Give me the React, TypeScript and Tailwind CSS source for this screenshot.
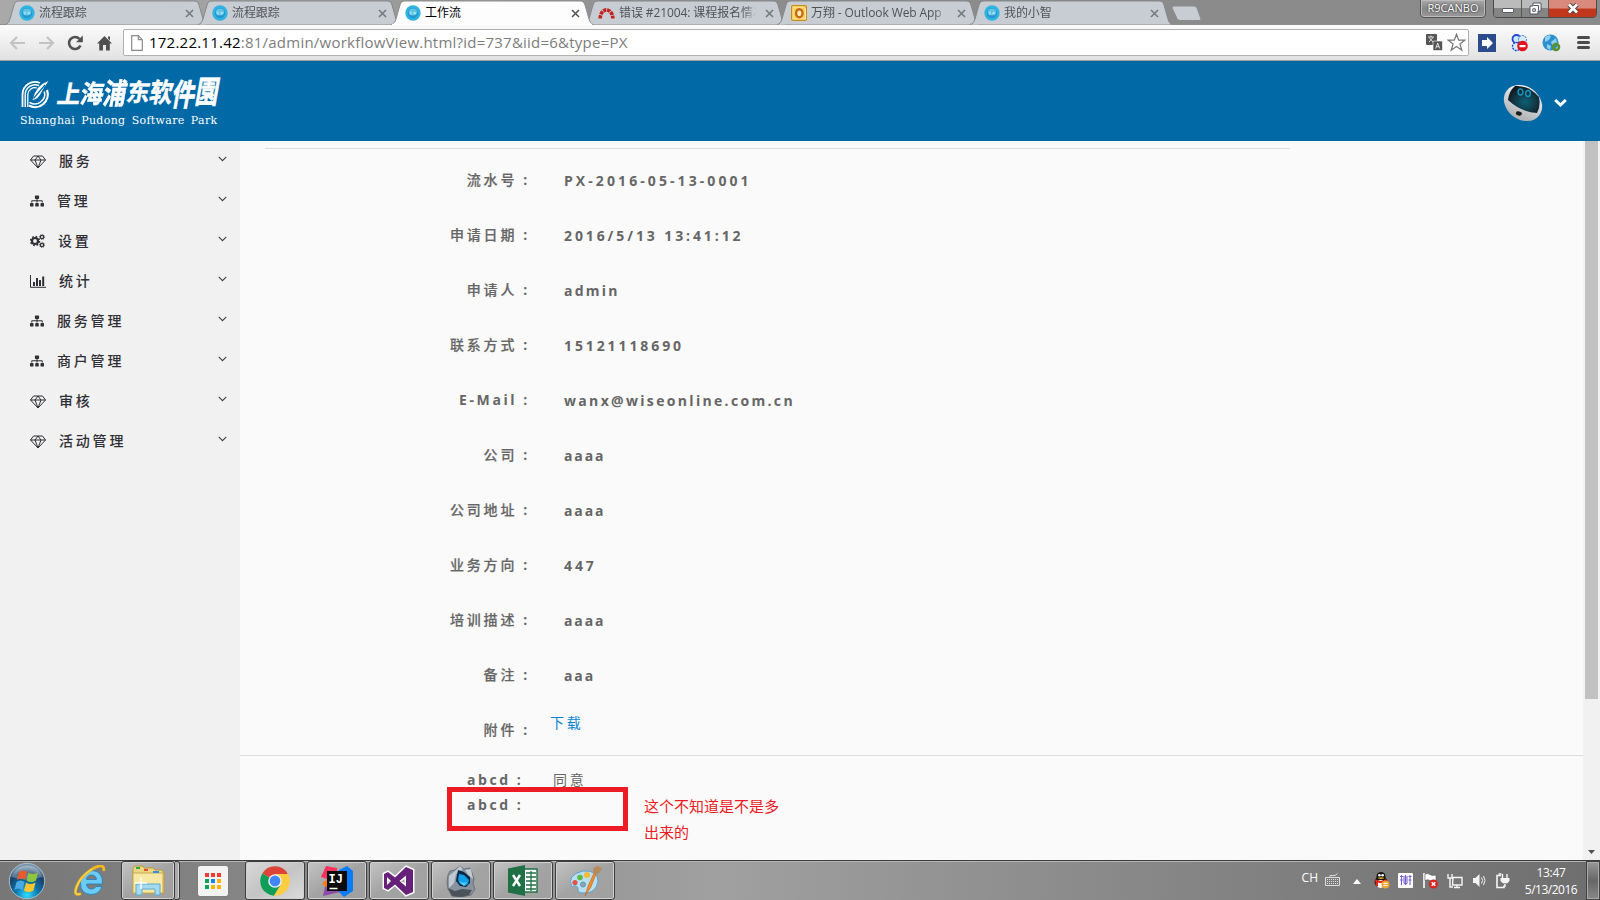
import React from "react";
import { FaSitemap } from "react-icons/fa";

type IconName = "gem" | "sitemap" | "cogs" | "chart";

const menu: { icon: IconName; label: string }[] = [
  { icon: "gem", label: "服务" },
  { icon: "sitemap", label: "管理" },
  { icon: "cogs", label: "设置" },
  { icon: "chart", label: "统计" },
  { icon: "sitemap", label: "服务管理" },
  { icon: "sitemap", label: "商户管理" },
  { icon: "gem", label: "审核" },
  { icon: "gem", label: "活动管理" },
];

const fields: [string, string][] = [
  ["流水号", "PX-2016-05-13-0001"],
  ["申请日期", "2016/5/13 13:41:12"],
  ["申请人", "admin"],
  ["联系方式", "15121118690"],
  ["E-Mail", "wanx@wiseonline.com.cn"],
  ["公司", "aaaa"],
  ["公司地址", "aaaa"],
  ["业务方向", "447"],
  ["培训描述", "aaaa"],
  ["备注", "aaa"],
];

const tabs = [
  { icon: "site", title: "流程跟踪" },
  { icon: "site", title: "流程跟踪" },
  { icon: "site", title: "工作流", active: true },
  { icon: "redmine", title: "错误 #21004: 课程报名情况" },
  { icon: "outlook", title: "万翔 - Outlook Web App" },
  { icon: "site", title: "我的小智" },
];

const logoChars = [
  { c: "上", style: "scale-y-[1.05] translate-y-[1px]" },
  { c: "海", style: "scale-y-[1.1]" },
  { c: "浦", style: "scale-y-[1.25]" },
  { c: "东", style: "scale-y-[1.05] -translate-y-[1px]" },
  { c: "软", style: "scale-y-[1.15] -translate-y-[1px]" },
  { c: "件", style: "scale-y-[1.35] translate-y-[1px]" },
  { c: "園", style: "scale-y-[1.35] -translate-y-[2px]" },
];

function Favicon({ kind }: { kind: string }) {
  if (kind === "redmine")
    return (
      <svg width="17" height="16" viewBox="0 0 17 16" className="shrink-0">
        <path d="M2.200 13.500A6.300 8.600 0 0 1 14.800 13.500" fill="none" stroke="#c2211f" strokeWidth="3.600" strokeDasharray="3.300 0.800" />
      </svg>
    );
  if (kind === "outlook")
    return (
      <svg width="16" height="16" viewBox="0 0 16 16" className="shrink-0">
        <rect x=".5" y=".5" width="15" height="15" rx="1" fill="#efb52c" stroke="#c98a1c" />
        <path d="M2 2h11l1.500 2v10H2z" fill="#f7d25a" stroke="#fff3c4" strokeWidth=".8" />
        <ellipse cx="8.300" cy="8.200" rx="3.200" ry="4" fill="#fff0b5" stroke="#c8681b" strokeWidth="2.400" />
      </svg>
    );
  return (
    <svg width="16" height="16" viewBox="0 0 16 16" className="shrink-0">
      <circle cx="8" cy="8" r="7.700" fill="#2fb4e2" />
      <circle cx="8" cy="8" r="5.200" fill="#2397cf" />
      <ellipse cx="8" cy="7" rx="4.200" ry="3.600" fill="#5fc3e6" />
      <path d="M7 7.200H5.300v1.900H7M8.600 9.200l.6-2 .8 2 .7-2" stroke="#c9eefb" strokeWidth=".7" fill="none" />
    </svg>
  );
}

function Tab({ icon, title, active }: { icon: string; title: string; active?: boolean }) {
  return (
    <div className={active ? "relative z-10 -mr-[9px] h-6 w-[202px]" : "relative -mr-[9px] h-6 w-[202px]"}>
      <svg className="absolute inset-0" width="202" height="25" viewBox="0 0 202 25">
        <path
          d="M0 24.500C3 24 4 22 5 19L9 5C10 2 11 1 14 1H189C192 1 193 2 194 5L198 19C199 22 200 24 202 24.500"
          fill={active ? "#fdfdfd" : "#c8ccd3"}
          stroke={active ? "#8d8d8d" : "#85878a"}
        />
        {active && <path d="M1 24.500H201" stroke="#fdfdfd" strokeWidth="1.500" />}
      </svg>
      <div className="relative flex h-6 items-center pt-0.5 pl-[14px]">
        <Favicon kind={icon} />
        <div
          className={
            active
              ? "ml-1 w-[140px] overflow-hidden text-[12px] whitespace-nowrap text-black"
              : "ml-1 w-[140px] overflow-hidden text-[12px] tracking-[-0.100px] whitespace-nowrap text-[#505256] [mask-image:linear-gradient(to_right,#000_88%,transparent_98%)]"
          }
        >
          {title}
        </div>
        <svg className="ml-[6px]" width="9" height="9" viewBox="0 0 9 9">
          <path d="M1 1l7 7M8 1L1 8" stroke={active ? "#555" : "#77797c"} strokeWidth="1.600" />
        </svg>
      </div>
    </div>
  );
}

function BrowserChrome() {
  return (
    <>
      <div className="flex h-6 bg-linear-to-r from-[#a9a9a9] via-[#8c8c8c] to-[#8a8a8a] pl-[5px]">
        {tabs.map((t, i) => (
          <Tab key={i} {...t} />
        ))}
        <svg className="mt-[5px] ml-[8px]" width="32" height="17" viewBox="0 0 32 17">
          <path d="M1 3Q1 1 3 1H23Q25 1 26 3L30 14Q30 15.500 28 15.500H9Q7 15.500 6 13.500Z" fill="#c8ccd3" stroke="#8a8c8f" />
        </svg>
        <div className="mt-[-1px] ml-auto flex h-[19px] w-[66px] items-center justify-center rounded-b-[4px] border border-[#555] bg-linear-to-b from-[#aaa] via-[#888] to-[#999] text-[11px] text-white shadow-[inset_0_0_0_1px_#bbb] [text-shadow:0_0_2px_#000]">
          R9CANBO
        </div>
        <div className="mt-[-1px] mr-[3px] ml-[7px] flex h-[19px] w-[104px] overflow-hidden rounded-b-[4px] border border-[#4c4c4c]">
          <div className="flex w-[28px] items-center justify-center border-r border-[#555] bg-linear-to-b from-[#bbb] from-50% to-[#858585] to-50%">
            <div className="mt-[4px] h-[5px] w-[12px] rounded-[1px] border border-[#555a66] bg-white" />
          </div>
          <div className="flex w-[27px] items-center justify-center border-r border-[#555] bg-linear-to-b from-[#bbb] from-50% to-[#858585] to-50%">
            <svg width="13" height="13" viewBox="0 0 13 13">
              <path d="M4 1h8v8h-3v3H1V4h3z" fill="#fff" stroke="#505664" />
              <path d="M4.500 3.500h5v5M3.800 6.800h2.500v2.500H3.800z" fill="none" stroke="#505664" />
            </svg>
          </div>
          <div className="flex flex-1 items-center justify-center bg-linear-to-b from-[#d98a7c] from-45% to-[#c2371b] to-55%">
            <svg width="12" height="11" viewBox="0 0 12 11">
              <path d="M2 1.500l8 8M10 1.500l-8 8" stroke="#4b3b40" strokeWidth="4.600" />
              <path d="M2 1.500l8 8M10 1.500l-8 8" stroke="#fff" strokeWidth="2.800" />
            </svg>
          </div>
        </div>
      </div>
      <div className="flex h-[37px] items-center border-t border-b border-t-[#8d8d8d] border-b-[#9d9d9d] bg-linear-to-b from-[#fbfbfb] to-[#e2e2e2] pr-[10px] pl-[9px]">
        <svg width="17" height="16" viewBox="0 0 17 16">
          <path d="M16 8H2M8 2L2 8l6 6" fill="none" stroke="#c3c3c3" strokeWidth="2.200" />
        </svg>
        <svg className="ml-3" width="17" height="16" viewBox="0 0 17 16">
          <path d="M1 8h14M9 2l6 6-6 6" fill="none" stroke="#c3c3c3" strokeWidth="2.200" />
        </svg>
        <svg className="ml-[12px]" width="17" height="16" viewBox="0 0 17 16">
          <path d="M13.500 10.500A6 6 0 1 1 12.500 4" fill="none" stroke="#505050" strokeWidth="2.600" />
          <path d="M15.800 .5v6.700H9z" fill="#505050" />
        </svg>
        <svg className="ml-[13px]" width="15" height="16" viewBox="0 0 15 16">
          <path d="M7.500 1L15 8.500h-2.200V15.500H9V10H6v5.500H2.200V8.500H0zM11 1.500h2v4l-2-2z" fill="#505050" />
        </svg>
        <div className="ml-[11px] flex h-[27px] w-[1346px] items-center rounded-[2px] border border-[#b0b0b0] bg-white pl-[7px]">
          <svg width="12" height="16" viewBox="0 0 12 16">
            <path d="M.7.7h6.600l4 4v10.600H.7zM7.300.7v4h4" fill="#fff" stroke="#8a8a8a" strokeWidth="1.200" />
          </svg>
          <div className="ml-[6px] text-[15px] tracking-[0.230px] whitespace-nowrap text-[#7d7d7d]">
            <span className="text-black">172.22.11.42</span>:81/admin/workflowView.html?id=737&amp;iid=6&amp;type=PX
          </div>
          <svg className="ml-auto" width="17" height="17" viewBox="0 0 17 17">
            <rect width="11" height="11" rx="1" fill="#555" />
            <rect x="7" y="7" width="9.500" height="9.500" rx="1" fill="#555" stroke="#fff" strokeWidth=".6" />
            <path d="M2 3h6M5 1.500v1.500M3 3.500l4 4.500M7 3.500l-4 4.500M9.700 14.500l2-5.500 2 5.500M10.500 12.700h2.600" stroke="#fff" strokeWidth=".8" fill="none" />
          </svg>
          <svg className="mr-[2px] ml-[4px]" width="19" height="19" viewBox="0 0 19 19">
            <path d="M9.500 1.200l2.200 6h6l-4.800 3.800 1.900 6.300-5.300-3.800-5.300 3.800 1.900-6.300L1.300 7.200h6z" fill="#fff" stroke="#777" strokeWidth="1.200" />
          </svg>
        </div>
        <svg className="ml-[9px]" width="18" height="18" viewBox="0 0 18 18">
          <rect width="18" height="18" fill="#2c4b8d" />
          <path d="M4 6h5V3l6 6-6 6v-3H4z" fill="#fff" />
        </svg>
        <svg className="ml-[15px]" width="17" height="18" viewBox="0 0 17 18">
          <circle cx="5.500" cy="5" r="4" fill="#c8e9ff" stroke="#1f45d2" strokeWidth="1.800" />
          <circle cx="11.500" cy="5.500" r="4" fill="#d5ebfb" stroke="#3560c8" strokeDasharray="2 1" />
          <circle cx="5.500" cy="12.500" r="4" fill="#d5ebfb" stroke="#1f45d2" strokeWidth="1.300" strokeDasharray="2 1" />
          <circle cx="11.500" cy="12" r="5.300" fill="#e0141e" />
          <rect x="8.500" y="11" width="6" height="2.200" fill="#fff" />
        </svg>
        <svg className="ml-[14px]" width="19" height="18" viewBox="0 0 19 18">
          <circle cx="8.500" cy="8.500" r="8" fill="#2b8fd0" />
          <path d="M3 3q4-3 6-1L7 6 3 8zM9 8l5-4 1 5-4 4zM5 10l4 2-1 4-3-2z" fill="#8ed0ee" />
          <circle cx="14" cy="13" r="3" fill="none" stroke="#58912a" strokeWidth="2.600" />
        </svg>
        <div className="ml-auto flex w-[13px] flex-col gap-[2px]">
          <i className="h-[3px] rounded-sm bg-[#4c4c4c]" />
          <i className="h-[3px] rounded-sm bg-[#4c4c4c]" />
          <i className="h-[3px] rounded-sm bg-[#4c4c4c]" />
        </div>
      </div>
    </>
  );
}

function Header() {
  return (
    <header className="flex h-20 items-center bg-[#0069a6] pr-[33px] pl-5 text-white">
      <div className="flex w-[204px] flex-col">
        <div className="flex h-[37px] items-center">
          <svg className="mt-[2px]" width="31" height="29" viewBox="0 0 31 29" fill="none" stroke="#fff">
            <path d="M2.500 27V14.500A12.500 12.500 0 0 1 20 3" strokeWidth="1.800" />
            <path d="M5.200 27V14.500A9.800 9.800 0 0 1 19 5.700" strokeWidth="1.400" />
            <path d="M7.800 27V14.500A7.200 7.200 0 0 1 17 8" strokeWidth="1.300" />
            <path d="M27 10A12.700 12.700 0 0 1 9 25.500" strokeWidth="2.200" />
            <path d="M24.300 11.500A9.800 9.800 0 0 1 9.500 22.300" strokeWidth="1.500" />
            <path d="M28.500 1Q16 5 12.500 20Q18.500 19 21.500 12Q24 7 28.500 1z" fill="#fff" stroke="none" />
            <path d="M13.500 18.500L25 5" stroke="#0069a6" strokeWidth="1.200" />
          </svg>
          <div className="ml-[7px] flex skew-x-[-10deg] text-[23px] leading-[34px] font-bold [-webkit-text-stroke:0.500px_#fff]">
            {logoChars.map(({ c, style }) => (
              <span key={c} className={"block w-[23px] " + style}>
                {c}
              </span>
            ))}
          </div>
        </div>
        <div className="mt-[1px] font-['DejaVu_Serif','Liberation_Serif',serif] text-[11px] leading-[15px] tracking-[0.320px] whitespace-nowrap [word-spacing:2.400px]">
          Shanghai Pudong Software Park
        </div>
      </div>
      <svg className="mt-[3px] ml-auto" width="40" height="40" viewBox="0 0 40 40">
        <defs>
          <radialGradient id="face" cx=".55" cy=".6" r=".6">
            <stop offset="0" stopColor="#0d6076" />
            <stop offset="1" stopColor="#121a20" />
          </radialGradient>
          <linearGradient id="shell" x1="0" y1="0" x2=".3" y2="1">
            <stop offset="0" stopColor="#fff" />
            <stop offset="1" stopColor="#b3b5b8" />
          </linearGradient>
        </defs>
        <ellipse cx="20" cy="20" rx="20.500" ry="16.500" transform="rotate(37 20 20)" fill="url(#shell)" />
        <path d="M12 3Q26 2 36 14Q38 23 34 30Q18 29 5 17Q6 8 12 3z" fill="url(#face)" />
        <ellipse cx="17.500" cy="9" rx="2.400" ry="3" fill="none" stroke="#1794c2" strokeWidth="1.400" />
        <ellipse cx="25" cy="10.500" rx="2.400" ry="3" fill="none" stroke="#1794c2" strokeWidth="1.400" />
        <ellipse cx="16" cy="30.500" rx="3" ry="2.100" fill="#1b1b1b" transform="rotate(15 16 30)" />
      </svg>
      <svg className="mt-[3px] ml-[11px]" width="13" height="10" viewBox="0 0 13 10">
        <path d="M1.200 2l5.300 5L11.800 2" fill="none" stroke="#fff" strokeWidth="3" />
      </svg>
    </header>
  );
}

function MenuIcon({ name }: { name: IconName }) {
  if (name === "sitemap") return <FaSitemap className="h-[14px] w-[14px]" />;
  if (name === "cogs")
    return (
      <svg width="15" height="14" viewBox="0 0 15 14" fill="none" stroke="currentColor">
        <circle cx="5" cy="7" r="3" strokeWidth="2.200" />
        <circle cx="5" cy="7" r="4.500" strokeWidth="1.400" strokeDasharray="1.770 1.764" />
        <circle cx="12" cy="3" r="1.700" strokeWidth="1.300" />
        <circle cx="12" cy="3" r="2.600" strokeWidth=".7" strokeDasharray="1 1.040" />
        <circle cx="12" cy="11" r="1.700" strokeWidth="1.300" />
        <circle cx="12" cy="11" r="2.600" strokeWidth=".7" strokeDasharray="1 1.040" />
      </svg>
    );
  if (name === "chart")
    return (
      <svg width="16" height="14" viewBox="0 0 16 14">
        <path d="M.5 1v12.300H16" fill="none" stroke="currentColor" />
        <path d="M4 8v4M7 4v8M10 6v6M13.200 2.500V12" stroke="currentColor" strokeWidth="2" />
      </svg>
    );
  return (
    <svg className="mt-[2px]" width="16" height="14" viewBox="0 0 16 14" fill="none" stroke="currentColor" strokeLinejoin="round">
      <path d="M3.500 1h9L15.500 5 8 13 .5 5zM.5 5h15M8 1L5 5l3 8 3-8z" />
    </svg>
  );
}

function Sidebar() {
  return (
    <nav className="w-60 shrink-0 bg-[#f1f1f1] text-[#2f2f35]">
      {menu.map((m, i) => (
        <div key={i} className="flex h-10 items-center pr-[13px] pl-[30px]">
          <MenuIcon name={m.icon} />
          <span className="mb-[2px] ml-[13px] text-[14px] font-medium tracking-[2.800px]">{m.label}</span>
          <svg className="mb-[5px] ml-auto" width="9" height="6" viewBox="0 0 9 6">
            <path d="M.7.8l3.800 3.800L8.300.8" fill="none" stroke="#444" strokeWidth="1.100" />
          </svg>
        </div>
      ))}
    </nav>
  );
}

function valueTracking(value: string) {
  if (value.includes("@")) return "mt-[1px] ml-[34px] tracking-[2.330px]";
  if (value.startsWith("aaa")) return "mt-[1px] ml-[34px] tracking-[1.900px]";
  if (/^[a-z]/.test(value)) return "mt-[1px] ml-[34px] tracking-[2.200px]";
  if (value.startsWith("PX")) return "mt-[1px] ml-[34px] tracking-[3.080px]";
  return "mt-[1px] ml-[34px] tracking-[2.900px]";
}

function Content() {
  return (
    <main className="relative flex-1 bg-[#fafafa] text-[14px] leading-5 tracking-[2.800px] text-[#666]">
      <div className="mt-[7px] ml-[25px] h-px w-[1025px] bg-[#ddd]" />
      {fields.map(([k, v]) => (
        <div key={k} className="flex h-[55px] pt-[21px] font-bold">
          <div className="w-[290px] text-right font-medium">
            <span className={k === "E-Mail" ? "font-bold tracking-[2.600px]" : "[-webkit-text-stroke:0.200px_#666]"}>{k}</span>
            <span className="ml-[6px] font-bold">:</span>
          </div>
          <div className={valueTracking(v)}>{v}</div>
        </div>
      ))}
      <div className="flex h-14 pt-[21px]">
        <div className="w-[290px] shrink-0 text-right font-medium">
          <span className="[-webkit-text-stroke:0.200px_#666]">附件</span>
          <span className="ml-[6px] font-bold">:</span>
        </div>
        <a className="-mt-[7px] ml-[20px] text-[#0b84d0]" href="#">
          下载
        </a>
      </div>
      <div className="border-t border-[#ddd] pt-[11px] leading-[25px]">
        <div className="flex pl-[227px]">
          <span className="w-[86px] font-bold tracking-[2.600px]">
            abcd<span className="ml-[6px]">:</span>
          </span>
          <span>同意</span>
        </div>
        <div className="pl-[227px] font-bold tracking-[2.600px]">
          abcd<span className="ml-[6px]">:</span>
        </div>
      </div>
      <div className="absolute top-[646px] left-[207px] h-[44px] w-[181px] border-[5px] border-[#ed1c24]" />
      <div className="absolute top-[652px] left-[404px] w-[140px] text-[15px] leading-[26px] tracking-normal text-[#ed1c24]">
        这个不知道是不是多出来的
      </div>
    </main>
  );
}

function TaskButton({ children, bright, narrow }: { children: React.ReactNode; bright?: boolean; narrow?: boolean }) {
  return (
    <div
      className={
        "flex h-[39px] shrink-0 items-center justify-center rounded-[3px] border border-[#3d3d3d] shadow-[inset_0_0_0_1px_#d0d0d0] " +
        (narrow ? "w-[54px] " : "w-[60px] ") +
        (bright
          ? "bg-linear-to-br from-[#d9d9d9] via-[#c4c4c4] to-[#dcdcdc]"
          : "bg-linear-to-br from-[#c4c4c4] via-[#a3a3a3] to-[#a0a0a0]")
      }
    >
      {children}
    </div>
  );
}

function StartOrb() {
  return (
    <svg width="38" height="38" viewBox="0 0 38 38" className="shrink-0">
      <defs>
        <radialGradient id="orb" cx=".5" cy=".9" r=".8">
          <stop offset="0" stopColor="#32dcff" />
          <stop offset=".4" stopColor="#0b77ae" />
          <stop offset=".8" stopColor="#1b3f66" />
          <stop offset="1" stopColor="#7695ae" />
        </radialGradient>
      </defs>
      <circle cx="19" cy="19" r="17.700" fill="url(#orb)" stroke="#a9bdc9" />
      <path d="M4 15A15.500 15.500 0 0 1 34 15Q19 20 4 15z" fill="#fff" opacity=".28" />
      <path d="M11 10q4-3 8 0l-2 8q-4-3-8 0z" fill="#e8592b" />
      <path d="M20.500 10.500q4 3 9.500 0l-2 8q-5 3-9.500 0z" fill="#8fc53e" />
      <path d="M8.500 20q4-3 8 0l-2 8q-4-3-8 0z" fill="#4aa8e4" />
      <path d="M18 20.500q4 3 9.500 0l-2 8q-5 3-9.500 0z" fill="#fbc62f" />
    </svg>
  );
}

const launcherDots = [
  "bg-[#f33b30]",
  "bg-[#f33b30]",
  "bg-[#f33b30]",
  "bg-[#10a05b]",
  "bg-[#1182e8]",
  "bg-[#fbb40b]",
  "bg-[#10a05b]",
  "bg-[#fbb40b]",
  "bg-[#fbb40b]",
];

function Taskbar() {
  return (
    <footer className="flex h-10 items-center border-t border-[#3c3c3c] bg-linear-to-r from-[#777] via-[#a0a0a0] via-45% to-[#6e6e6e] pl-[8px] text-white shadow-[inset_0_1px_0_#b5b5b5]">
      <StartOrb />
      <svg className="ml-[28px] shrink-0" width="32" height="32" viewBox="0 0 32 32">
        <path
          d="M28.500 19H12.500q.5 5 5 5 3 0 4.500-2.500h6Q25.500 29.500 17 29.500 6 29 6.500 17.500 7.500 6 18 5.500q11 .5 10.500 13.500zM12.500 14.500h10q-.5-4.500-5-4.500t-5 4.500z"
          fill="#6bcbf4"
          stroke="#1a7fc1"
          strokeWidth=".8"
        />
        <path d="M7 28.500Q-1 32 2.500 22T17.500 4.500Q27-1.500 29.500 2.500L30 6" fill="none" stroke="#f0b91c" strokeWidth="2.800" />
        <path d="M6 29Q-1 31 3 21T18 4" fill="none" stroke="#ffe783" strokeWidth=".8" />
      </svg>
      <div className="ml-[15px] flex">
        <TaskButton narrow>
          <svg width="34" height="31" viewBox="0 0 34 31">
            <path d="M2 3l2-2h8l1 2h9l2 2h7l2 3v20H2z" fill="#edd681" stroke="#b9983f" />
            <path d="M2 8h30v20H2z" fill="#f7e8a5" stroke="#c7aa54" />
            <path d="M5 2h4v2H5z" fill="#28a845" />
            <path d="M13 4h4v2h-4z" fill="#df4d2f" />
            <path d="M22 6h6v2h-6z" fill="#3390df" />
            <path d="M5 19h24v11h-5v-6H11v6H5z" fill="#a5dbf1" stroke="#5ba9d0" />
            <path d="M10 12v12M4 18h12" stroke="#fff" strokeWidth="1.500" opacity=".9" />
          </svg>
        </TaskButton>
        <div className="h-[39px] w-[5px] rounded-r-[3px] border border-l-0 border-[#3d3d3d] bg-[#aaa] shadow-[inset_-1px_0_0_#d0d0d0]" />
      </div>
      <div className="ml-[18px] grid h-[30px] w-[30px] shrink-0 grid-cols-[4px_4px_4px] place-content-center gap-[2px] rounded-[2px] bg-[#f3f3f3] shadow-[0_0_1px_#555]">
        {launcherDots.map((c, i) => (
          <i key={i} className={"h-[4px] w-[4px] " + c} />
        ))}
      </div>
      <div className="ml-[17px] flex gap-[2px]">
        <TaskButton bright>
          <svg width="30" height="30" viewBox="0 0 30 30">
            <path d="M15 15L2.300 7.500A14.700 14.700 0 0 1 27.800 8H15z" fill="#db4437" />
            <path d="M15 15L2.300 7.500A14.700 14.700 0 0 0 14 29.700L21 18.500z" fill="#0f9d58" />
            <path d="M15 8H27.900A14.700 14.700 0 0 1 14 29.700L21 18.500z" fill="#ffcd40" />
            <circle cx="15" cy="15" r="6.800" fill="#f1f1f1" />
            <circle cx="15" cy="15" r="5.400" fill="#4285f4" />
          </svg>
        </TaskButton>
        <TaskButton>
          <svg width="32" height="32" viewBox="0 0 32 32">
            <path d="M5 1l11 2v12L6 14 0 12z" fill="#fe315d" />
            <path d="M18 5l8-4 6 5v20l-9 6-6-6z" fill="#087cfa" />
            <path d="M1 18l6-4 3 8-3 3z" fill="#f97a12" />
            <path d="M4 22l-2 9 17-4-6-8z" fill="#8b4ca8" />
            <rect x="6" y="6" width="20" height="20" fill="#0b0b0b" />
            <path d="M8.500 23.500h8" stroke="#fff" strokeWidth="1.500" />
            <text x="7.500" y="17.500" fontSize="12" fontWeight="bold" fill="#fff" fontFamily="Liberation Mono, monospace">
              IJ
            </text>
          </svg>
        </TaskButton>
        <TaskButton>
          <svg width="34" height="32" viewBox="0 0 34 32">
            <path
              d="M24 2l7 3v22l-7 3L13 19.500 6 25l-4-2V9l4-2 7 5.500zM24 10.500L17.500 16l6.500 5.500zM5 12v8l4-4z"
              fill="#68217a"
              fillRule="evenodd"
              stroke="#fff"
              strokeWidth="3"
              paintOrder="stroke"
            />
          </svg>
        </TaskButton>
        <TaskButton>
          <svg width="32" height="32" viewBox="0 0 32 32">
            <path d="M3 10l2-4 5-1 5-4 4 3 6-1 2 5 2 6-1 5 2 5-4 6-10 2-9-1-4-7-1-7z" fill="#8993a0" stroke="#4a525c" strokeWidth=".6" />
            <path d="M4 11l7-6 4-4 3 3-7 5-2 9-5 5zM20 5l6-1 2 10-4-3z" fill="#c0c8d0" />
            <path d="M3 23l7 3 7-2 10 1-3 5-8 2-9-1z" fill="#4b525b" />
            <path d="M13 5l6 2 6 5v6l-4 4-6-1-4-5 1-6z" fill="#062846" />
            <path d="M13 15L14 9l5 1 5 5-1 4-3 2-5-2z" fill="#139fe5" />
            <path d="M14 16q4 3 8 1l-3 4z" fill="#56d2fb" />
          </svg>
        </TaskButton>
        <TaskButton>
          <svg width="32" height="31" viewBox="0 0 32 31">
            <path d="M17 4h13v23H17z" fill="#fff" stroke="#1f7145" strokeWidth="1.400" />
            <path d="M19 8h10M19 12h10M19 16h10M19 20h10M19 24h10M24 6v20" stroke="#1f7145" strokeWidth="1.300" />
            <path d="M1 3.500L18 0v31L1 27.500z" fill="#1f7145" />
            <path d="M6 10l7 11M13 10L6 21" stroke="#fff" strokeWidth="2.400" />
          </svg>
        </TaskButton>
        <TaskButton>
          <svg width="33" height="32" viewBox="0 0 33 32">
            <path d="M14 6Q29 5 29 16 27 29 14 28 8 28 9 23 7 19 3 22-3 10 14 6z" fill="#b9dff3" stroke="#5da2cb" />
            <circle cx="14" cy="19.500" r="2.500" fill="#8fa2ad" stroke="#5b96bb" />
            <circle cx="6" cy="17.500" r="2.600" fill="#e25347" />
            <circle cx="11" cy="12.500" r="2.800" fill="#61b843" />
            <circle cx="18" cy="10" r="3" fill="#f4bc35" />
            <path d="M16 31l3-10 6-13 2 1-5 13z" fill="#ef8b29" stroke="#b7611a" strokeWidth=".5" />
            <path d="M24 8q-1-6 5-7l4 2q-2 6-6 6z" fill="#b68a5f" />
          </svg>
        </TaskButton>
      </div>
      <div className="ml-auto flex h-full shrink-0 items-center">
        <span className="mb-[5px] text-[12px]">CH</span>
        <svg className="mb-[3px] ml-[7px]" width="15" height="13" viewBox="0 0 15 13">
          <path d="M.5 4.500h14v8H.5zM5 4V2.500h5l2.500-2" fill="none" stroke="#ddd" />
          <path d="M2 6.500h11M2 8.500h11M2 10.500h11" fill="none" stroke="#ddd" strokeDasharray="1 1" />
        </svg>
        <svg className="mt-[2px] ml-[13px]" width="8" height="5" viewBox="0 0 8 5">
          <path d="M4 0l4 5H0z" fill="#fff" />
        </svg>
        <svg className="ml-[12px]" width="17" height="17" viewBox="0 0 17 17">
          <ellipse cx="8" cy="10" rx="6.500" ry="6" fill="#151515" />
          <circle cx="8" cy="4.500" r="4.500" fill="#151515" />
          <ellipse cx="7.500" cy="12" rx="3.800" ry="4" fill="#fff" />
          <path d="M2 7q6 4 11 0l1 2.500Q8 12 5 10.500V14H3z" fill="#e2271c" />
          <circle cx="6.400" cy="3.300" r="1.300" fill="#fff" />
          <circle cx="9.600" cy="3.300" r="1.300" fill="#fff" />
          <path d="M4.500 6q3.500-1.500 7 0-3.500 2-7 0z" fill="#f5a721" />
          <circle cx="12.500" cy="12.500" r="4" fill="#f3a431" />
          <path d="M10.500 11.500h4M10.500 13.500h4" stroke="#fff" />
        </svg>
        <svg className="ml-[8px]" width="15" height="15" viewBox="0 0 15 15">
          <rect width="15" height="15" rx="1" fill="#fff" />
          <path d="M2 3.500h3M3.500 2v10M6 3v7q1.500 2 3 0V3M7.500 2v10M10.500 3.500h3M12 2v10M2 7h3M10.500 7h3" fill="none" stroke="#7a62cc" strokeWidth="1.100" />
        </svg>
        <svg className="ml-[9px]" width="17" height="17" viewBox="0 0 17 17">
          <path d="M2 1v15" stroke="#fff" strokeWidth="1.600" />
          <path d="M3 2q3-1 5 .5t6 .5v6q-4 1-6-.5T3 8.500z" fill="#fff" stroke="#444" strokeWidth=".5" />
          <circle cx="11.500" cy="12" r="4.500" fill="#d9231e" />
          <path d="M9.700 10.200l3.600 3.600M13.300 10.200l-3.600 3.600" stroke="#fff" strokeWidth="1.500" />
        </svg>
        <svg className="ml-[8px]" width="16" height="16" viewBox="0 0 16 16">
          <path d="M6 4.500h9v7.500H5.500zM7 14.500h6M10 12v2.500M1 1v4h4V1M3 5v9h3" fill="none" stroke="#f5f5f5" strokeWidth="1.400" />
        </svg>
        <svg className="ml-[9px]" width="14" height="15" viewBox="0 0 14 15">
          <path d="M1 5h2.500l4-4v13l-4-4H1z" fill="#f5f5f5" />
          <path d="M9.500 4.500q2 3 0 6M11.500 3q3 4.500 0 9" fill="none" stroke="#f5f5f5" />
        </svg>
        <svg className="ml-[9px]" width="15" height="16" viewBox="0 0 15 16">
          <path d="M6 2.500H2v12h7v-2" fill="none" stroke="#f5f5f5" strokeWidth="1.600" />
          <path d="M3.500 1h3M7.500 1v4M12 1v4" stroke="#f5f5f5" strokeWidth="1.400" />
          <path d="M5.500 5h9v3q-2 3-4.500 3T5.500 8zM9.200 10v4h1.500v-4z" fill="#f5f5f5" />
        </svg>
        <div className="ml-[14px] w-[54px] text-center text-[12px] leading-[17px] whitespace-nowrap">
          <div className="tracking-[-0.300px]">13:47</div>
          <div className="-mx-1 tracking-[-0.500px]">5/13/2016</div>
        </div>
        <div className="ml-[8px] h-[39px] w-[14px] border border-[#424242] bg-linear-to-b from-[#999] via-[#666] to-[#888] shadow-[inset_0_0_0_1px_#aaa]" />
      </div>
    </footer>
  );
}

export default function App() {
  return (
    <div className="flex h-[900px] w-[1600px] flex-col overflow-hidden bg-white font-['Open_Sans','Noto_Sans_CJK_SC',sans-serif]">
      <BrowserChrome />
      <Header />
      <div className="flex h-[719px]">
        <Sidebar />
        <Content />
        <div className="flex w-[17px] flex-col items-center bg-[#f1f1f1]">
          <div className="h-[558px] w-[13px] bg-[#c1c1c1]" />
          <svg className="mt-auto mb-[6px]" width="7" height="4" viewBox="0 0 7 4">
            <path d="M0 0h7L3.500 4z" fill="#505050" />
          </svg>
        </div>
      </div>
      <Taskbar />
    </div>
  );
}
